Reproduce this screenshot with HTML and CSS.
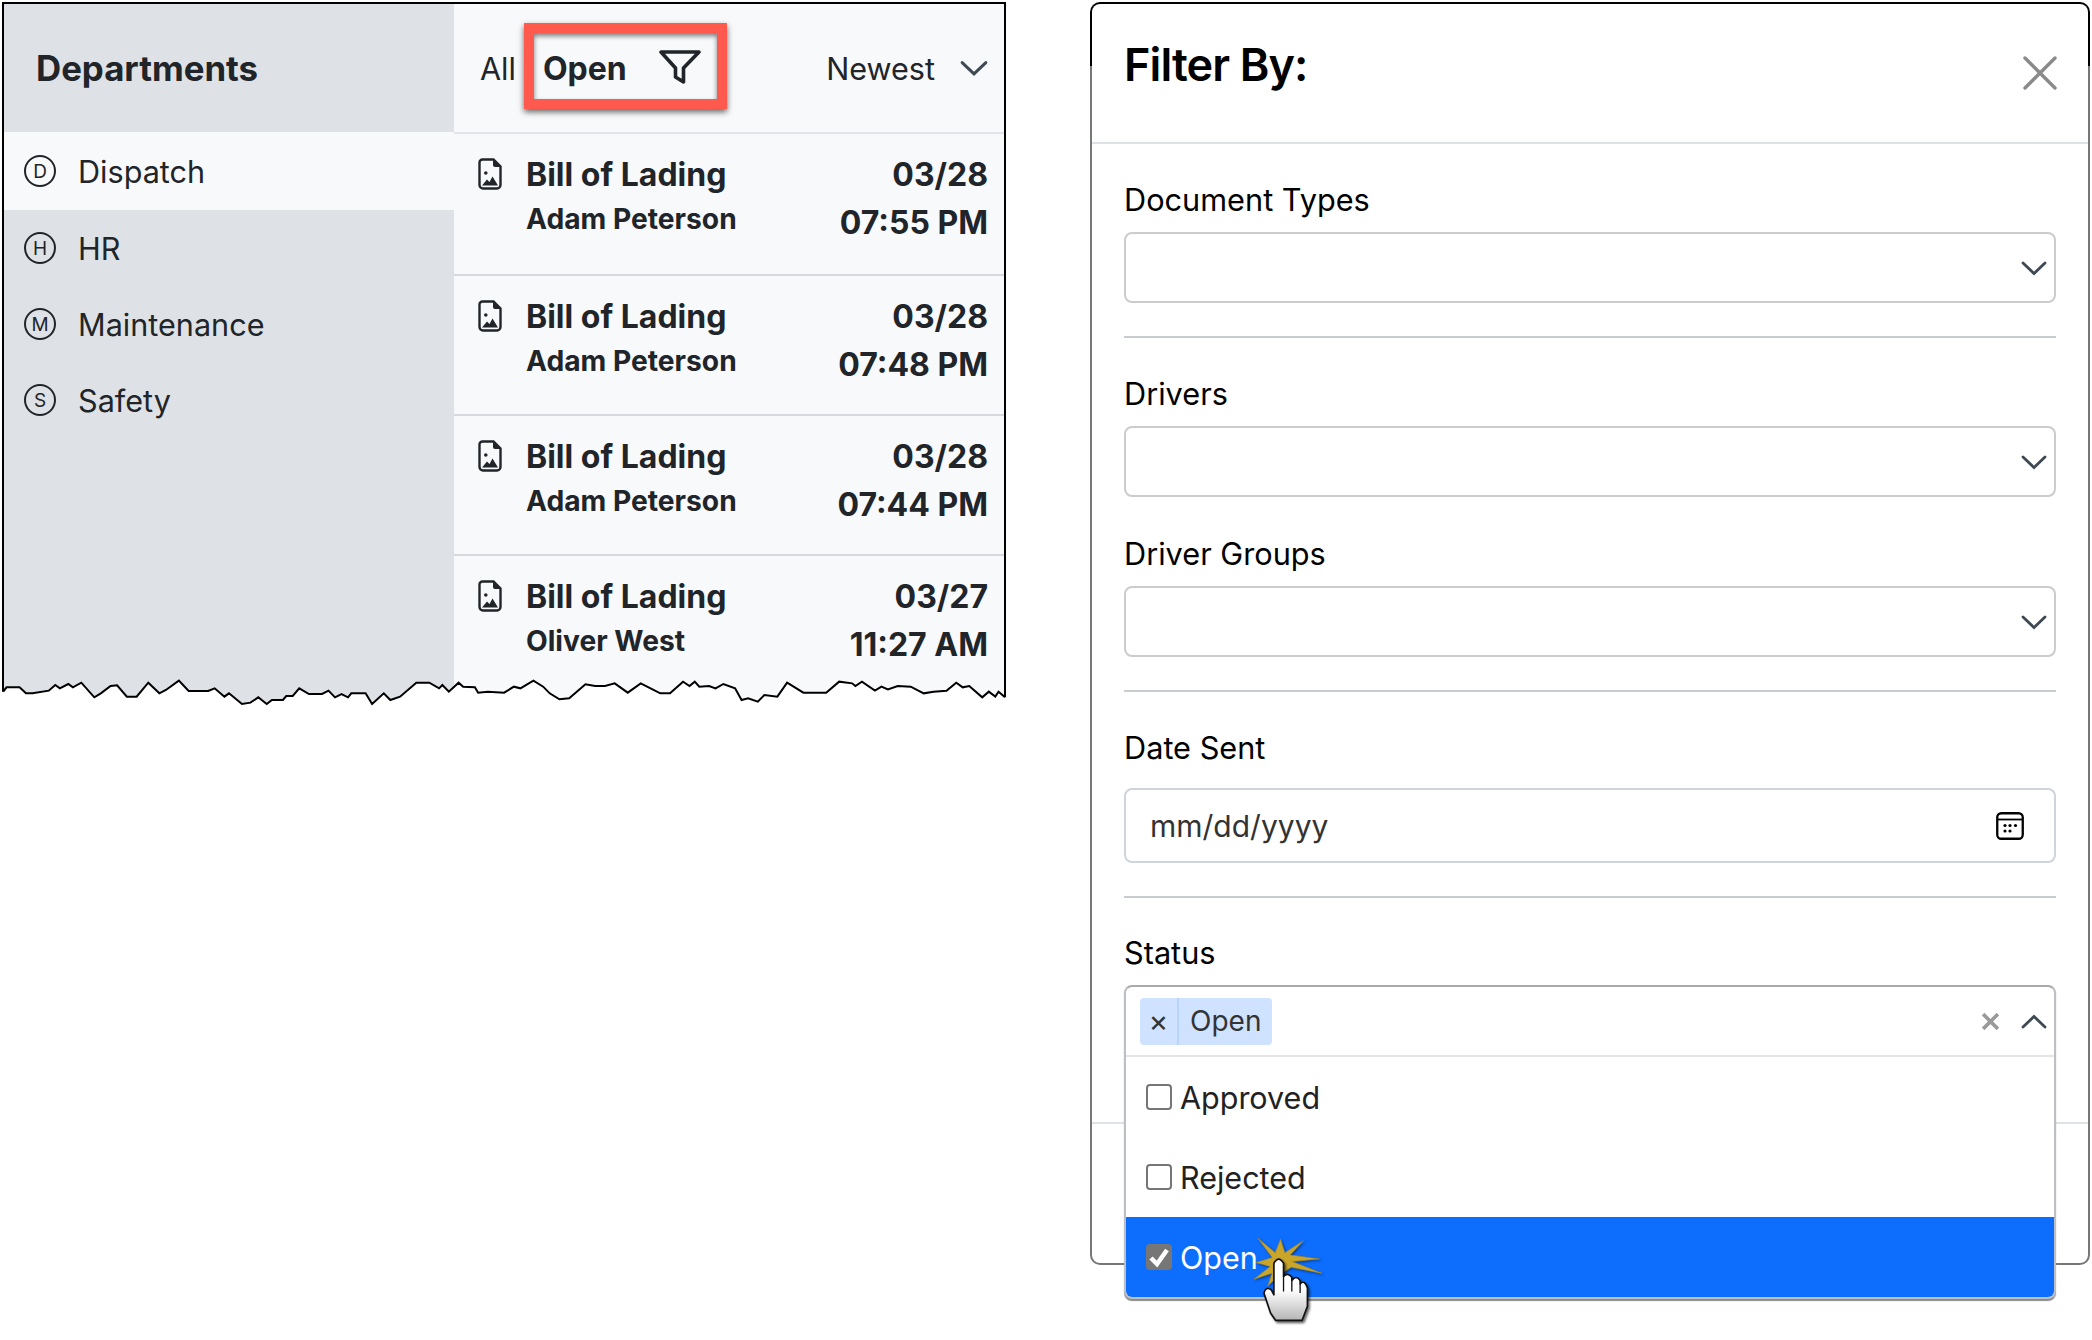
FILE: index.html
```html
<!DOCTYPE html>
<html lang="en">
<head>
<meta charset="utf-8">
<title>Filter By</title>
<link rel="stylesheet" href="styles.css">
</head>
<body>
<svg class="defs" width="0" height="0" aria-hidden="true">
  <symbol id="file" viewBox="0 0 24 32">
    <path d="M4.5 1.5H15.5L22.5 8.5V27a3.5 3.5 0 0 1-3.5 3.5H5A3.5 3.5 0 0 1 1.500 27V4.500A3 3 0 0 1 4.500 1.500Z" fill="none" stroke="#212529" stroke-width="2.400"/>
    <path d="M15 1.500L22.500 9H17a2 2 0 0 1-2-2Z" fill="#212529"/>
    <circle cx="7.800" cy="15" r="1.800" fill="#212529"/>
    <path d="M4 27.500L9 21.500L11.500 24L14.500 18.500L20 27.500Z" fill="#212529"/>
  </symbol>
  <symbol id="chev" viewBox="0 0 26 16">
    <path d="M2 3L13 13.500L24 3" fill="none" stroke="#3f4953" stroke-width="2.800" stroke-linecap="round"/>
  </symbol>
</svg>
<main class="page">
  <section class="inbox">
    <aside class="departments">
      <h2 class="dept-title">Departments</h2>
      <ul class="dept-list">
        <li class="dept active"><span class="badge">D</span>Dispatch</li>
        <li class="dept"><span class="badge">H</span>HR</li>
        <li class="dept"><span class="badge">M</span>Maintenance</li>
        <li class="dept"><span class="badge">S</span>Safety</li>
      </ul>
    </aside>
    <div class="messages">
      <div class="toolbar">
        <span class="tab">All</span>
        <span class="tab tab-open">Open</span>
        <svg class="funnel" viewBox="0 0 44 38"><path d="M3 3H41L25.500 19V33L17.500 28V19Z" fill="none" stroke="#212529" stroke-width="3.600" stroke-linejoin="round"/></svg>
        <span class="sort">Newest</span>
        <svg class="sort-chev"><use href="#chev"/></svg>
      </div>
      <article class="row row-first">
        <svg class="file"><use href="#file"/></svg>
        <div class="who"><div class="doc">Bill of Lading</div><div class="person">Adam Peterson</div></div>
        <div class="when"><div>03/28</div><div>07:55 PM</div></div>
      </article>
      <article class="row">
        <svg class="file"><use href="#file"/></svg>
        <div class="who"><div class="doc">Bill of Lading</div><div class="person">Adam Peterson</div></div>
        <div class="when"><div>03/28</div><div>07:48 PM</div></div>
      </article>
      <article class="row">
        <svg class="file"><use href="#file"/></svg>
        <div class="who"><div class="doc">Bill of Lading</div><div class="person">Adam Peterson</div></div>
        <div class="when"><div>03/28</div><div>07:44 PM</div></div>
      </article>
      <article class="row">
        <svg class="file"><use href="#file"/></svg>
        <div class="who"><div class="doc">Bill of Lading</div><div class="person">Oliver West</div></div>
        <div class="when"><div>03/27</div><div>11:27 AM</div></div>
      </article>
    </div>
    <div class="callout"></div>
    <svg class="tear" viewBox="0 0 1568 480" preserveAspectRatio="none">
      <polygon class="tear-fill" points="0,395 5,395 10,382 30,382 40,400 50,400 75,392 85,375 92,385 105,372 112,382 125,368 145,412 155,400 170,378 180,376 195,410 210,410 228,368 245,400 255,390 275,362 290,393 320,393 330,385 345,410 352,400 372,432 385,428 397,412 410,432 418,420 435,420 440,408 450,408 460,385 475,402 495,402 505,392 515,412 525,402 535,412 540,400 562,400 572,432 590,400 600,420 615,410 640,368 660,368 675,385 680,375 690,395 705,368 712,380 730,382 735,398 750,395 775,398 790,380 800,385 820,362 835,380 845,400 860,418 875,415 900,373 915,378 930,378 945,370 965,398 985,370 1000,385 1015,400 1030,400 1050,365 1060,378 1068,365 1075,380 1090,378 1100,385 1112,372 1130,385 1140,420 1150,415 1165,425 1175,405 1195,410 1210,368 1235,398 1270,398 1290,365 1310,370 1315,378 1325,365 1345,392 1355,380 1365,388 1380,378 1400,380 1420,400 1435,395 1455,392 1470,368 1480,382 1490,378 1510,412 1520,395 1530,410 1535,395 1545,412 1568,412 1568,480 0,480"/>
      <polyline class="tear-line" points="5,395 10,382 30,382 40,400 50,400 75,392 85,375 92,385 105,372 112,382 125,368 145,412 155,400 170,378 180,376 195,410 210,410 228,368 245,400 255,390 275,362 290,393 320,393 330,385 345,410 352,400 372,432 385,428 397,412 410,432 418,420 435,420 440,408 450,408 460,385 475,402 495,402 505,392 515,412 525,402 535,412 540,400 562,400 572,432 590,400 600,420 615,410 640,368 660,368 675,385 680,375 690,395 705,368 712,380 730,382 735,398 750,395 775,398 790,380 800,385 820,362 835,380 845,400 860,418 875,415 900,373 915,378 930,378 945,370 965,398 985,370 1000,385 1015,400 1030,400 1050,365 1060,378 1068,365 1075,380 1090,378 1100,385 1112,372 1130,385 1140,420 1150,415 1165,425 1175,405 1195,410 1210,368 1235,398 1270,398 1290,365 1310,370 1315,378 1325,365 1345,392 1355,380 1365,388 1380,378 1400,380 1420,400 1435,395 1455,392 1470,368 1480,382 1490,378 1510,412 1520,395 1530,410 1535,395 1545,412"/>
    </svg>
  </section>

  <section class="filter-frame">
    <div class="filter">
      <header class="filter-head">
        <h1 class="filter-title">Filter By:</h1>
        <svg class="close" viewBox="0 0 34 34"><path d="M2 2L32 32M32 2L2 32" stroke="#8a8a8a" stroke-width="3.400" stroke-linecap="round"/></svg>
      </header>
      <div class="filter-body">
        <label class="label">Document Types</label>
        <div class="select"><svg class="chev"><use href="#chev"/></svg></div>
        <hr class="rule">
        <label class="label">Drivers</label>
        <div class="select"><svg class="chev"><use href="#chev"/></svg></div>
        <label class="label label-next">Driver Groups</label>
        <div class="select"><svg class="chev"><use href="#chev"/></svg></div>
        <hr class="rule">
        <label class="label label-date">Date Sent</label>
        <div class="date-input">
          <span>mm/dd/yyyy</span>
          <svg class="calendar" viewBox="0 0 28 28">
            <rect x="1.250" y="1.250" width="25.500" height="25.500" rx="4" fill="none" stroke="#000" stroke-width="2.300"/>
            <path d="M1.500 7.500H26.500" stroke="#000" stroke-width="1.800"/>
            <g fill="#000"><circle cx="9" cy="13.500" r="1.600"/><circle cx="14" cy="13.500" r="1.600"/><circle cx="19.500" cy="13.500" r="1.600"/><circle cx="9" cy="19" r="1.600"/><circle cx="14" cy="19" r="1.600"/></g>
          </svg>
        </div>
        <hr class="rule rule-last">
        <label class="label">Status</label>
        <div class="status">
          <div class="menu">
            <div class="menu-head">
              <span class="tag"><span class="tag-x">×</span><span class="tag-text">Open</span></span>
              <svg class="clear" viewBox="0 0 18 18"><path d="M2 2L16 16M16 2L2 16" stroke="#9a9a9a" stroke-width="3.400"/></svg>
              <svg class="chev-up"><use href="#chev"/></svg>
            </div>
            <div class="option"><span class="check"></span>Approved</div>
            <div class="option"><span class="check"></span>Rejected</div>
            <div class="option option-on">
              <span class="check check-on"><svg viewBox="0 0 26 26"><path d="M5 14L11 20L21 6" fill="none" stroke="#fff" stroke-width="4.500"/></svg></span>Open
            </div>
          </div>
        </div>
      </div>
      <footer class="filter-foot"></footer>
    </div>
  </section>
</main>
<svg class="pointer" viewBox="520 820 220 290">
  <defs>
    <linearGradient id="palm" x1="0" y1="0" x2="0" y2="1">
      <stop offset="0.500" stop-color="#fff"/>
      <stop offset="1" stop-color="#b5b5b5"/>
    </linearGradient>
  </defs>
  <polygon class="burst" points="535,835 587,878 603,838 616,878 672,842 632,885 720,897 638,905 727,940 635,922 600,945 565,978 577,940 523,958 572,920 530,908 578,893"/>
  <g class="hand">
    <path d="M583 990V910Q597 885 612 910V950Q624 936 637 952V962Q650 944 662 962V972Q676 958 684 985V1040L668 1082H588L573 1060L553 1000Q558 978 575 990L583 1005Z" fill="url(#palm)" stroke="#111" stroke-width="5" stroke-linejoin="round"/>
    <path d="M612 950V995M637 962V995M662 972V1000" stroke="#111" stroke-width="4"/>
  </g>
</svg>
</body>
</html>
```
FILE: styles.css
```css
* { box-sizing: border-box; }
html, body { margin: 0; padding: 0; }
body {
  width: 2092px;
  height: 1340px;
  overflow: hidden;
  position: relative;
  background: #fff;
  font-family: "Inter", "Liberation Sans", sans-serif;
  color: #212529;
}
.defs { position: absolute; }
.page {
  display: flex;
  align-items: flex-start;
  justify-content: space-between;
  padding: 2px 2px 0 2px;
}

/* left panel */
.inbox {
  position: relative;
  display: flex;
  width: 1004px;
  height: 718px;
  border: 2px solid #000;
  border-bottom: 0;
  background: #f8f9fa;
}
.departments {
  width: 450px;
  flex: none;
  background: #dee2e6;
}
.dept-title {
  margin: 0;
  height: 128px;
  padding-left: 32px;
  display: flex;
  align-items: center;
  font-size: 34.800px;
  font-weight: 700;
}
.dept-list { list-style: none; margin: 0; padding: 0; }
.dept {
  height: 76px;
  display: flex;
  align-items: center;
  gap: 22px;
  padding-left: 20px;
  font-size: 30.600px;
}
.dept.active { height: 78px; background: #f8f9fa; }
.badge {
  width: 32px;
  height: 32px;
  flex: none;
  border: 2px solid #212529;
  border-radius: 50%;
  display: flex;
  align-items: center;
  justify-content: center;
  font-size: 19px;
}
.messages { flex: 1; min-width: 0; }
.toolbar {
  height: 128px;
  display: flex;
  align-items: center;
  padding: 0 16px 0 26px;
  font-size: 30.600px;
}
.tab-open { font-size: 32px; font-weight: 700; margin-left: 27px; }
.funnel { width: 44px; height: 38px; margin-left: 31px; }
.sort { margin-left: auto; }
.sort-chev { width: 28px; height: 18px; margin-left: 25px; }
.row {
  height: 140px;
  display: flex;
  align-items: flex-start;
  padding: 22px 16px 0 24px;
  border-top: 2px solid #d6d9de;
}
.row-first { height: 142px; border-top-color: #e1e4e8; }
.file { width: 24px; height: 32px; flex: none; margin: 2px 24px 0 0; }
.who { flex: 1; }
.doc { font-size: 32px; font-weight: 700; line-height: 38px; }
.person { font-size: 28.200px; font-weight: 700; line-height: 38px; margin-top: 6px; }
.when { text-align: right; font-size: 32px; font-weight: 700; line-height: 48px; margin-top: -5px; }
.callout {
  position: absolute;
  left: 520px;
  top: 19px;
  width: 203px;
  height: 86px;
  border: 10px solid #ff5a4d;
  box-shadow: 0 3px 6px rgba(0, 0, 0, .6), inset 0 3px 5px rgba(0, 0, 0, .5);
}
.tear {
  position: absolute;
  left: -4px;
  top: 556px;
  width: 1020px;
  height: 160px;
  overflow: visible;
}
.tear-fill { fill: #fff; }
.tear-line {
  fill: none;
  stroke: #000;
  stroke-width: 2px;
  vector-effect: non-scaling-stroke;
}

/* right panel */
.filter-frame {
  width: 1000px;
  height: 1263px;
  padding: 2px;
  border-radius: 10px;
  background: linear-gradient(#000 0 64px, #777 64px);
}
.filter {
  height: 100%;
  display: flex;
  flex-direction: column;
  background: #fff;
  border-radius: 8px;
}
.filter-head {
  height: 140px;
  flex: none;
  display: flex;
  justify-content: space-between;
  padding: 0 31px 0 32px;
  border-bottom: 2px solid #dee2e6;
}
.filter-title { margin: 0; padding-top: 31px; font-size: 45px; letter-spacing: -.9px; line-height: 60px; font-weight: 600; color: #000; }
.close { width: 34px; height: 34px; margin-top: 52px; }
.filter-body { flex: 1; padding: 38px 32px 0 32px; }
.label { display: block; height: 38px; line-height: 36px; font-size: 30.700px; color: #000; margin-bottom: 12px; }
.label-next { margin-top: 38px; margin-bottom: 13px; line-height: 38px; }
.label-date { margin-top: -1px; margin-bottom: 21px; line-height: 38px; }
.select {
  height: 71px;
  border: 2px solid #ccc;
  border-radius: 8px;
  display: flex;
  align-items: center;
  justify-content: flex-end;
  padding-right: 7px;
}
.chev { width: 26px; height: 16px; }
.rule { margin: 33px 0 38px; border: 0; border-top: 2px solid #c8cbcf; }
.rule-last { margin: 33px 0 37px; }
.date-input {
  height: 75px;
  border: 2px solid #ced4da;
  border-radius: 8px;
  display: flex;
  align-items: center;
  justify-content: space-between;
  padding: 0 30px 0 24px;
  font-size: 30px;
  color: #333;
}
.calendar { width: 28px; height: 28px; }
.status { position: relative; height: 71px; }
.menu {
  position: absolute;
  left: 0;
  right: 0;
  top: 0;
  height: 314px;
  background: #fff;
  border: 2px solid #bcbfc3;
  border-top-color: #aaa;
  border-radius: 8px;
  box-shadow: 0 2px 1px #8a8a8a;
  overflow: hidden;
  z-index: 2;
}
.menu-head {
  height: 70px;
  display: flex;
  align-items: center;
  padding: 0 7px 0 14px;
  border-bottom: 2px solid #e4e4e4;
}
.tag {
  display: flex;
  height: 47px;
  align-items: center;
  background: #cfe2ff;
  border-radius: 4px;
  font-size: 28px;
  color: #333;
}
.tag-x {
  width: 39px;
  height: 47px;
  line-height: 47px;
  text-align: center;
  font-size: 30px;
  border-right: 2px solid #b9d5fb;
}
.tag-text { padding: 0 11px; }
.clear { width: 19px; height: 19px; margin-left: auto; }
.chev-up { width: 26px; height: 16px; margin: 2px 0 0 21px; transform: rotate(180deg); }
.option {
  height: 80px;
  display: flex;
  align-items: center;
  gap: 8px;
  padding-left: 20px;
  font-size: 30.500px;
  color: #222;
}
.check {
  width: 26px;
  height: 26px;
  flex: none;
  border: 2px solid #767676;
  border-radius: 4px;
  background: #fff;
}
.option-on { background: #0d6efd; color: #fff; }
.check-on { background: #767676; border-color: #767676; display: flex; align-items: center; justify-content: center; }
.check-on svg { width: 26px; height: 26px; flex: none; }
.filter-foot { height: 141px; flex: none; border-top: 2px solid #dee2e6; }

/* animated pointer overlay */
.pointer {
  position: absolute;
  left: 1253px;
  top: 1233px;
  width: 73px;
  height: 97px;
  overflow: visible;
  z-index: 3;
}
.burst { fill: #c9a52a; stroke: #a88a24; stroke-width: 2; filter: drop-shadow(4px 4px 4px rgba(0, 30, 90, .6)); }
.hand { filter: drop-shadow(5px 6px 4px rgba(0, 0, 0, .6)); }
```
